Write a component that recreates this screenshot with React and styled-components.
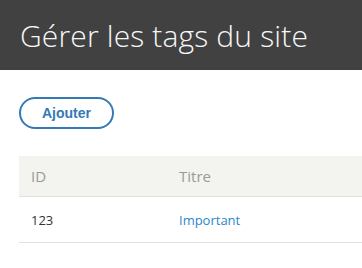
import React from 'react';
import styled, {createGlobalStyle} from 'styled-components';

const GlobalStyle = createGlobalStyle`
    body {
        margin: 0;
        background: #fff;
        font-family: "Open Sans", sans-serif;
    }
`;

const Header = styled.header`
    height: 70px;
    box-sizing: border-box;
    padding: 15px 0 0 20px;
    background-color: #414141;
`;

const Title = styled.h1`
    margin: 0;
    font-family: "Open Sans", sans-serif;
    font-weight: 300;
    font-size: 30px;
    letter-spacing: 0.15px;
    color: #f7f7f7;
`;

const Content = styled.div`
    padding: 27px 0 0 19px;
`;

const Button = styled.button`
    width: 95px;
    height: 32px;
    border: 2px solid #337ab7;
    border-radius: 16px;
    background: transparent;
    color: #337ab7;
    font-family: "Liberation Sans", Arial, sans-serif;
    font-weight: bold;
    font-size: 14px;
    cursor: pointer;
`;

const Table = styled.table`
    width: 100%;
    margin-top: 27px;
    border-collapse: collapse;
`;

const HeadCell = styled.th`
    height: 40px;
    padding: 0 12px;
    text-align: left;
    background-color: #f3f3f0;
    border-bottom: 1px solid #e0e0e0;
    font-weight: 400;
    font-size: 15px;
    color: #9a9a9a;
    width: ${props => props.$width || 'auto'};
`;

const Cell = styled.td`
    height: 45px;
    padding: 0 12px;
    border-bottom: 1px solid #e0e0e0;
    font-size: 13px;
    color: #333;
`;

const TagLink = styled.a`
    color: #2a87cc;
    text-decoration: none;
`;

const tags = [{id: 123, title: 'Important'}];

const App = () => {
    return (
        <>
            <GlobalStyle />
            <Header>
                <Title>Gérer les tags du site</Title>
            </Header>
            <Content>
                <Button>Ajouter</Button>
                <Table>
                    <thead>
                        <tr>
                            <HeadCell $width="124px">ID</HeadCell>
                            <HeadCell>Titre</HeadCell>
                        </tr>
                    </thead>
                    <tbody>
                        {tags.map(tag =>
                            <tr key={tag.id}>
                                <Cell>{tag.id}</Cell>
                                <Cell><TagLink href="#">{tag.title}</TagLink></Cell>
                            </tr>
                        )}
                    </tbody>
                </Table>
            </Content>
        </>
    )
}

export default App
